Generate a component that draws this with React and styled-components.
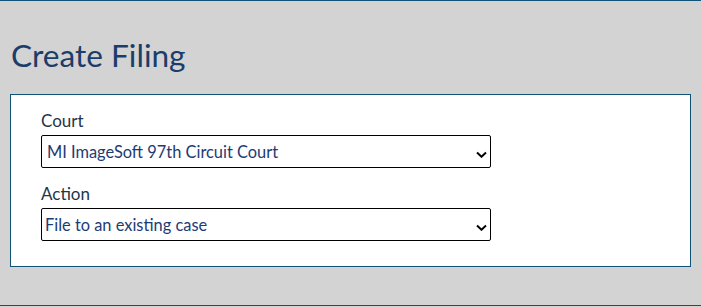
import React from "react";
import styled, { createGlobalStyle } from "styled-components";

const GlobalStyle = createGlobalStyle`
  html, body {
    margin: 0;
    padding: 0;
    background: #d3d3d3;
  }
  body {
    font-family: Lato, "Open Sans", sans-serif;
  }
`;

const Page = styled.div`
  box-sizing: border-box;
  height: 306px;
  border-top: 1px solid #0f5478;
  border-bottom: 1px solid #0f5478;
  background: #d3d3d3;
  padding: 0 10px;
  display: flex;
  flex-direction: column;
`;

const Title = styled.h1`
  flex-shrink: 0;
  margin: 0;
  padding: 34px 0 0 1px;
  height: 93px;
  box-sizing: border-box;
  font-family: Lato, sans-serif;
  font-weight: 400;
  font-size: 31.6px;
  line-height: 40px;
  color: #1a3d69;
`;

const Card = styled.section`
  flex-shrink: 0;
  box-sizing: border-box;
  width: 681px;
  height: 173px;
  background: #ffffff;
  border: 1px solid #0f5478;
  padding: 15px 30px 0 30px;
  display: flex;
  flex-direction: column;
  gap: 15px;
`;

const Field = styled.div`
  display: flex;
  flex-direction: column;
`;

const Label = styled.label`
  font-family: Lato, sans-serif;
  font-size: 17px;
  line-height: 22px;
  color: #243549;
  margin-bottom: 3px;
`;

const SelectWrap = styled.div`
  position: relative;
  width: 450px;
`;

const Select = styled.select`
  appearance: none;
  -webkit-appearance: none;
  box-sizing: border-box;
  width: 450px;
  height: 33px;
  margin: 0;
  padding: 0 24px 0 ${(p) => p.$indent}px;
  border: 1px solid #000;
  border-radius: 2px;
  background: #fff;
  font-family: Lato, sans-serif;
  font-size: 16.4px;
  color: #1d3b74;
  outline: none;
`;

const Chevron = styled.svg`
  position: absolute;
  right: 4px;
  top: 16px;
  width: 11px;
  height: 7px;
  pointer-events: none;
`;

function Dropdown({ id, value, indent }) {
  return (
    <SelectWrap>
      <Select id={id} defaultValue={value} $indent={indent}>
        <option value={value}>{value}</option>
      </Select>
      <Chevron viewBox="0 0 11 7">
        <path d="M1 1.5 L5.5 5.8 L10 1.5" fill="none" stroke="#000" strokeWidth="1.9" />
      </Chevron>
    </SelectWrap>
  );
}

export default function App() {
  return (
    <>
      <GlobalStyle />
      <Page>
        <Title>Create Filing</Title>
        <Card>
          <Field>
            <Label htmlFor="court">Court</Label>
            <Dropdown id="court" value="MI ImageSoft 97th Circuit Court" indent={5} />
          </Field>
          <Field>
            <Label htmlFor="action">Action</Label>
            <Dropdown id="action" value="File to an existing case" indent={3} />
          </Field>
        </Card>
      </Page>
    </>
  );
}
